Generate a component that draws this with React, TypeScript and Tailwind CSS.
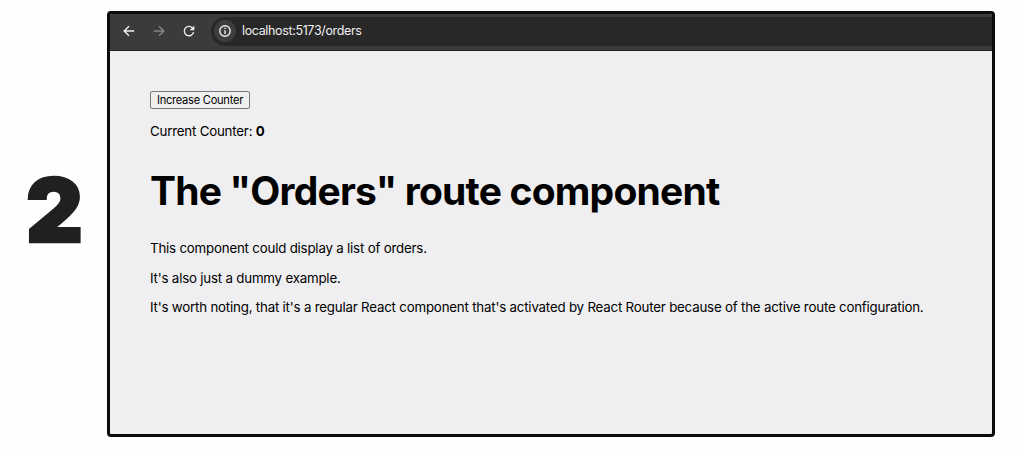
import React from "react";

function Toolbar() {
  return (
    <div className="flex h-[37px] shrink-0 items-center border-b border-[#222] bg-[#3b3b3b] pb-0.5 pl-[11px] text-[#efefef]">
      <svg className="h-4 w-4" viewBox="0 0 16 16" fill="none" stroke="currentColor" strokeWidth="1.4">
        <path d="M13.2 8H3.4M8 3.2L3.2 8L8 12.8" />
      </svg>
      <svg className="ml-3.5 h-4 w-4 text-[#858585]" viewBox="0 0 16 16" fill="none" stroke="currentColor" strokeWidth="1.4">
        <path d="M2.8 8H12.6M8 3.2L12.8 8L8 12.8" />
      </svg>
      <svg className="ml-3.5 h-4 w-4" viewBox="0 0 16 16" fill="none" stroke="currentColor" strokeWidth="1.4">
        <path d="M12.6 9.2A4.7 4.7 0 1 1 11.3 4.7" />
        <path d="M13.3 2.6V7.3H8.6Z" fill="currentColor" stroke="none" />
      </svg>
      <div className="ml-[14px] flex h-[29px] flex-1 items-center rounded-l-full bg-[#282828] pl-[3px]">
        <div className="flex h-[22px] w-[22px] items-center justify-center rounded-full bg-[#3e3e3e]">
          <svg className="h-4 w-4" viewBox="0 0 16 16" fill="none" stroke="currentColor" strokeWidth="1.4">
            <circle cx="8" cy="8" r="5.2" />
            <path d="M8 7.2V11M8 4.8V6.1" />
          </svg>
        </div>
        <span className="ml-[6px] text-[12.5px] leading-4 tracking-[-0.36px]">localhost:5173/orders</span>
      </div>
    </div>
  );
}

export default function App() {
  return (
    <div className="flex h-[450px] w-[1021px] overflow-hidden bg-[#fefefe] font-['Inter',sans-serif] text-black">
      <div className="w-[107px] shrink-0 pt-[160px] pl-[26px] text-[88px] leading-[100px] font-black text-[#20201f] [-webkit-text-stroke:2.5px_#20201f] [stroke-linejoin:round]">2</div>
      <main className="mt-[11px] flex h-[426px] w-[888px] flex-col overflow-hidden rounded-[4px] border-[3px] border-[#0c0c0c] bg-[#efeff1]">
        <Toolbar />
        <section className="flex flex-col items-start pt-[40px] pl-[40px] text-[13.3px] leading-5 tracking-[-0.2px] whitespace-nowrap">
          <button className="h-[18px] w-[100px] rounded-[2px] border border-[#777] bg-[#f0f0f0] text-[11.1px] leading-4 tracking-[-0.25px]">
            Increase Counter
          </button>
          <p className="mt-3">Current Counter: <b>0</b></p>
          <h1 className="mt-[25px] text-[39px] leading-[50px] font-bold tracking-[-0.8px]">The "Orders" route component</h1>
          <p className="mt-[22px]">This component could display a list of orders.</p>
          <p className="mt-[10px]">It's also just a dummy example.</p>
          <p className="mt-[9px]">It's worth noting, that it's a regular React component that's activated by React Router because of the active route configuration.</p>
        </section>
      </main>
    </div>
  );
}
